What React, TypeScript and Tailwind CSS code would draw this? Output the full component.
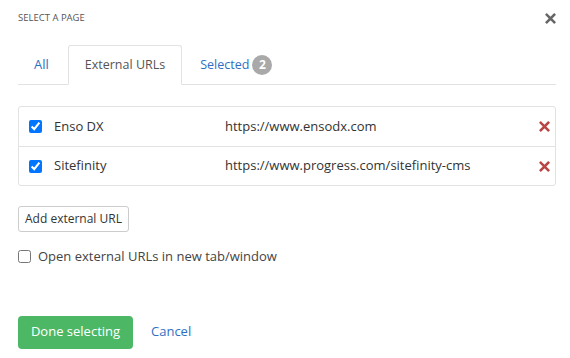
import React, { useState } from "react";

const font = { fontFamily: '"Open Sans", sans-serif' };

const Times = ({ className }: { className?: string }) => (
	<svg viewBox="0 0 12 12" className={className} aria-hidden="true">
		<path d="M2 2 L10 10 M10 2 L2 10" stroke="currentColor" strokeWidth="2.8" strokeLinecap="square" />
	</svg>
);

const rows = [
	{ id: 1, name: "Enso DX", url: "https://www.ensodx.com" },
	{ id: 2, name: "Sitefinity", url: "https://www.progress.com/sitefinity-cms" },
];

const App = () => {
	const [tab] = useState("external");

	return (
		<div className="w-[570px] h-[358px] bg-white text-[13px] text-[#333]" style={font}>
			<div className="flex items-center justify-between pl-[18px] pr-[14px] pt-[10px] h-[26px]">
				<span className="text-[9.5px] uppercase text-[#555]">Select a page</span>
				<Times className="w-[11px] h-[11px] text-[#666]" />
			</div>

			<div className="ml-[18px] mr-[14px] mt-[19px] flex border-b border-[#e2e2e2] h-[40px]">
				<div className="px-4 flex items-center text-[#2f6fc3]">All</div>
				<div className="px-4 ml-[3px] flex items-center bg-white border border-[#e2e2e2] border-b-white rounded-t-[3px] -mb-px text-[#555] text-[12.5px]">
					{tab === "external" && "External URLs"}
				</div>
				<div className="pl-[18px] flex items-center text-[#2f6fc3] text-[12.5px]">
					<span className="pt-[2px]">Selected</span>
					<span className="ml-[3px] w-[20px] h-[20px] rounded-full bg-[#a9a9a9] text-white font-bold text-[12px] flex items-center justify-center">
						2
					</span>
				</div>
			</div>

			<div className="ml-[18px] mr-[14px] mt-[21px] border border-[#e2e2e2] rounded-[3px]">
				{rows.map((r, i) => (
					<div
						key={r.id}
						className={`flex items-center h-[39px] pl-[10px] pr-[5px] ${i > 0 ? "border-t border-[#e2e2e2]" : ""}`}>
						<input type="checkbox" checked readOnly className="w-[13px] h-[13px] m-0" />
						<span className="ml-[12px] w-[171px] text-[#333]">{r.name}</span>
						<span className="flex-1 text-[#333]">{r.url}</span>
						<Times className="w-[11px] h-[11px] text-[#b94545]" />
					</div>
				))}
			</div>

			<button className="ml-[18px] mt-[20px] h-[26px] px-[6px] border border-[#ccc] rounded-[3px] bg-white text-[12px] text-[#333]">
				Add external URL
			</button>

			<label className="flex items-center ml-[18px] mt-[15px] text-[#444]">
				<input type="checkbox" className="w-[13px] h-[13px] m-0" />
				<span className="ml-[7px]">Open external URLs in new tab/window</span>
			</label>

			<div className="flex items-center ml-[18px] mt-[49px]">
				<button className="w-[115px] h-[33px] rounded-[4px] bg-[#4cb866] text-white text-[13px]">
					Done selecting
				</button>
				<span className="ml-[18px] text-[#2f6fc3]">Cancel</span>
			</div>
		</div>
	);
};

export default App;
